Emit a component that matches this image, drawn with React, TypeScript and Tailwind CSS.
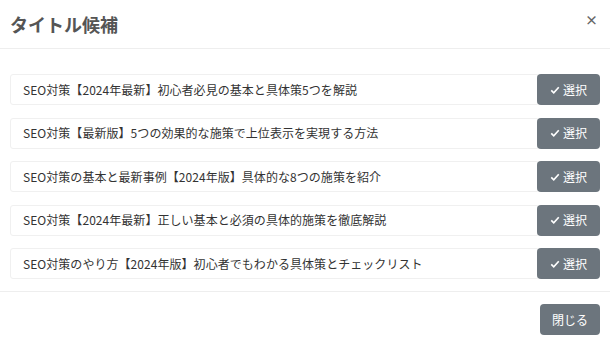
import React from 'react';

const titles: string[] = [
  'SEO対策【2024年最新】初心者必見の基本と具体策5つを解説',
  'SEO対策【最新版】5つの効果的な施策で上位表示を実現する方法',
  'SEO対策の基本と最新事例【2024年版】具体的な8つの施策を紹介',
  'SEO対策【2024年最新】正しい基本と必須の具体的施策を徹底解説',
  'SEO対策のやり方【2024年版】初心者でもわかる具体策とチェックリスト',
];

const CheckIcon = () => (
  <svg width="10" height="10" viewBox="0 0 16 16" className="mr-[3px]">
    <path d="M2 8.5 L6 12.5 L14 3.5" fill="none" stroke="currentColor" strokeWidth="2.6" />
  </svg>
);

const App: React.FC = () => {
  return (
    <div
      className="w-[610px] h-[344px] bg-white overflow-hidden text-[#333]"
      style={{ fontFamily: '"Noto Sans CJK JP", "Noto Sans", sans-serif' }}>
      <div className="flex items-center justify-between h-[49px] pl-[10px] pr-[12px] border-b border-[#eeeeee]">
        <h2 className="text-[18px] font-bold text-[#555] leading-none">タイトル候補</h2>
        <button className="text-[13px] font-bold text-[#666] leading-none -mt-[10px]">×</button>
      </div>
      <div className="flex flex-col gap-[12.5px] pt-[25px] pb-[12px] px-[10px] border-b border-[#eeeeee]">
        {titles.map((t) => (
          <div key={t} className="flex h-[31px]">
            <div className="flex-1 flex items-center pl-[12px] border border-[#f0f0f0] rounded-l-[3px] text-[12px] tracking-[0.05px]">
              {t}
            </div>
            <button className="w-[63px] flex items-center justify-center bg-[#6c757d] text-white text-[12px] rounded-[4px] -ml-[1px]">
              <CheckIcon />
              選択
            </button>
          </div>
        ))}
      </div>
      <div className="flex justify-end pt-[12px] px-[10px]">
        <button className="w-[60px] h-[31px] bg-[#6c757d] text-white text-[12px] rounded-[4px]">閉じる</button>
      </div>
    </div>
  );
};

export default App;
